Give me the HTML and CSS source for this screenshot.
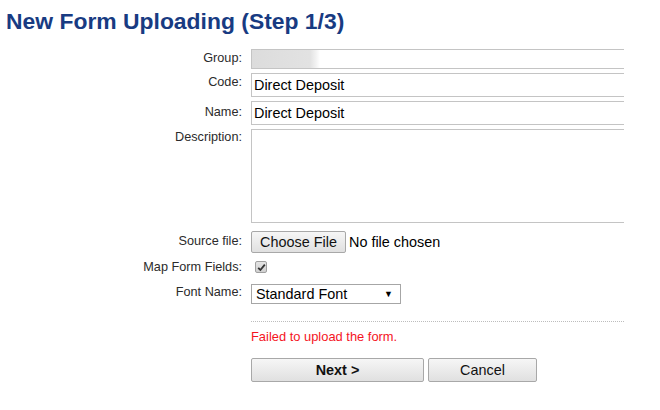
FILE: index.html
```html
<!DOCTYPE html>
<html lang="en">
<head>
<meta charset="utf-8">
<title>New Form Uploading (Step 1/3)</title>
<link rel="stylesheet" href="styles.css">
</head>
<body>
<h1 class="page-title">New Form Uploading (Step 1/3)</h1>
<form class="upload-form">
  <label class="lbl lbl-text">Group:</label>
  <div class="cell"><input class="txt txt-group" type="text" value=""></div>

  <label class="lbl lbl-text">Code:</label>
  <div class="cell"><input class="txt" type="text" value="Direct Deposit"></div>

  <label class="lbl lbl-name">Name:</label>
  <div class="cell"><input class="txt" type="text" value="Direct Deposit"></div>

  <label class="lbl lbl-area">Description:</label>
  <div class="cell"><textarea class="area"></textarea></div>

  <label class="lbl lbl-file">Source file:</label>
  <div class="cell cell-file">
    <button type="button" class="btn btn-file">Choose File</button>
    <span class="file-status">No file chosen</span>
  </div>

  <label class="lbl lbl-check">Map Form Fields:</label>
  <div class="cell cell-check">
    <span class="check">
      <svg width="9" height="9" viewBox="0 0 9 9"><path d="M1.2 4.8 L3.4 7 L7.8 1.6" fill="none" stroke="#333" stroke-width="1.8"/></svg>
    </span>
  </div>

  <label class="lbl lbl-select">Font Name:</label>
  <div class="cell cell-select">
    <div class="select-wrap">
      <select class="sel"><option>Standard Font</option></select>
      <span class="sel-arrow">▼</span>
    </div>
  </div>

  <div class="cell cell-sep"></div>

  <div class="cell cell-error">Failed to upload the form.</div>

  <div class="cell cell-actions">
    <button type="button" class="btn btn-next">Next &gt;</button>
    <button type="button" class="btn btn-cancel">Cancel</button>
  </div>
</form>
</body>
</html>
```

FILE: styles.css
```css
html, body {
  margin: 0;
  padding: 0;
  background: #fff;
}

body {
  font-family: "Liberation Sans", Arial, sans-serif;
  color: #333;
}

.page-title {
  margin: 0;
  padding: 7px 0 0 6px;
  font-size: 22.9px;
  line-height: 29px;
  font-weight: bold;
  color: #183b82;
}

.upload-form {
  width: 624px;
  overflow: hidden;
  margin-top: 13px;
  display: grid;
  grid-template-columns: 242px 1fr;
  column-gap: 9px;
  row-gap: 4px;
}

.lbl {
  grid-column: 1;
  text-align: right;
  font-size: 12.7px;
  line-height: 16px;
  color: #2b2b2b;
}

.lbl-text { padding-top: 1px; }
.lbl-name { padding-top: 3px; }
.lbl-area { padding-top: 0; }
.lbl-file { padding-top: 6px; }
.lbl-check { padding-top: 2px; }
.lbl-select { padding-top: 4px; }

.cell {
  grid-column: 2;
  min-width: 0;
}

.txt {
  display: block;
  box-sizing: border-box;
  width: calc(100% + 20px);
  height: 24px;
  margin: 0;
  padding: 0 2px;
  border: 1px solid #c4c4c4;
  font-family: "Liberation Sans", Arial, sans-serif;
  font-size: 14.4px;
  color: #000;
  background: #fff;
  outline: none;
}

.txt-group {
  height: 20px;
  background: linear-gradient(to right, #dcdcdc 0, #e2e2e2 58px, #f2f2f2 64px, #fff 68px);
}

.area {
  display: block;
  box-sizing: border-box;
  width: calc(100% + 20px);
  height: 94px;
  margin: 0;
  border: 1px solid #c4c4c4;
  resize: none;
  background: #fff;
  outline: none;
}

.cell-file {
  margin-top: 4px;
  display: flex;
  align-items: center;
  gap: 3px;
}

.btn {
  box-sizing: border-box;
  margin: 0;
  font-family: "Liberation Sans", Arial, sans-serif;
  font-size: 14.4px;
  color: #111;
  border: 1px solid #a8a8a8;
  border-radius: 2px;
  background: linear-gradient(#f6f6f6, #e0e0e0);
  padding: 0;
}

.btn-file {
  width: 95px;
  height: 22px;
}

.file-status {
  font-size: 14.4px;
  color: #000;
}

.cell-check {
  height: 19px;
  display: flex;
  align-items: center;
}

.check {
  box-sizing: border-box;
  width: 12px;
  height: 12px;
  margin-left: 4px;
  margin-top: 1px;
  border: 1px solid #a0a0a0;
  border-radius: 2px;
  background: linear-gradient(#e4e4e4, #d0d0d0);
  display: flex;
  align-items: center;
  justify-content: center;
}

.check svg { display: block; }

.cell-select {
  margin-top: 4px;
}

.select-wrap {
  position: relative;
  width: 150px;
  height: 20px;
}

.sel {
  box-sizing: border-box;
  width: 150px;
  height: 20px;
  margin: 0;
  padding: 0 0 0 4px;
  -webkit-appearance: none;
  appearance: none;
  border: 1px solid #a6a6a6;
  border-radius: 0;
  background: #fff;
  font-family: "Liberation Sans", Arial, sans-serif;
  font-size: 14.4px;
  color: #000;
  outline: none;
}

.sel-arrow {
  position: absolute;
  right: 8px;
  top: 4px;
  font-size: 9px;
  line-height: 12px;
  color: #000;
  pointer-events: none;
}

.cell-sep {
  margin-top: 13px;
  height: 0;
  border-top: 1px dotted #bdbdbd;
}

.cell-error {
  margin-top: 3px;
  font-size: 12.9px;
  line-height: 16px;
  color: #f5141e;
}

.cell-actions {
  margin-top: 9px;
  display: flex;
  gap: 4px;
  padding-bottom: 20px;
}

.btn-next {
  width: 173px;
  height: 24px;
  font-weight: bold;
}

.btn-cancel {
  width: 109px;
  height: 24px;
}
```
